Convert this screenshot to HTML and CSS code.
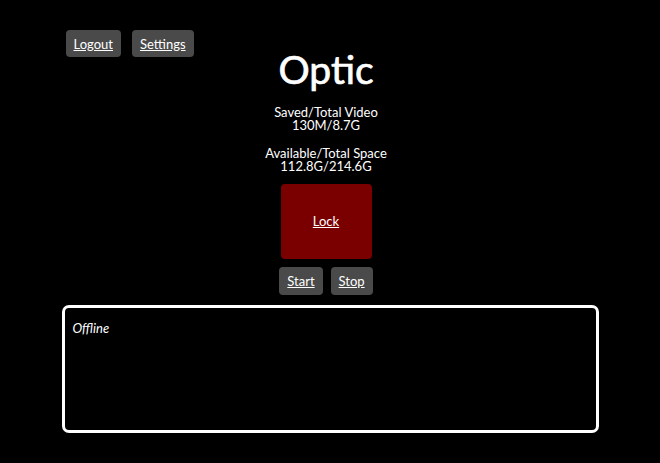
FILE: index.html
```html
<!DOCTYPE html>
<html>
<head>
<meta charset="utf-8">
<link rel="stylesheet" href="styles.css">
</head>
<body>
<div class="page">
  <header class="header">
    <nav class="nav">
      <a class="btn" href="#">Logout</a>
      <a class="btn" href="#">Settings</a>
    </nav>
    <h1 class="title">Optic</h1>
    <div></div>
  </header>
  <main class="center">
    <p class="stat">Saved/Total Video<br>130M/8.7G</p>
    <p class="stat">Available/Total Space<br>112.8G/214.6G</p>
    <a class="lock" href="#">Lock</a>
    <div class="controls">
      <a class="btn" href="#">Start</a>
      <a class="btn" href="#">Stop</a>
    </div>
  </main>
  <section class="log">
    <em>Offline</em>
  </section>
</div>
</body>
</html>
```
FILE: styles.css
```css
html, body {
  margin: 0;
  background: #000;
  color: #fff;
  font-family: Lato, "Open Sans", sans-serif;
  font-size: 13px;
}
.page {
  width: 537px;
  margin: 0 auto;
  padding-top: 30px;
}
.header {
  display: grid;
  grid-template-columns: 1fr auto 1fr;
  align-items: start;
}
.nav {
  display: flex;
  gap: 11px;
  padding-left: 4px;
}
.btn {
  display: inline-flex;
  align-items: center;
  justify-content: center;
  height: 27px;
  padding: 0 8px;
  background: #4a4a4a;
  border-radius: 4px;
  color: #fff;
  text-decoration: underline;
  font-size: 13px;
}
.controls .btn {
  height: 28px;
}
.title {
  margin: 16px 8px 0 0;
  font-family: Lato, sans-serif;
  font-size: 39px;
  font-weight: normal;
  -webkit-text-stroke: 0.7px #fff;
  line-height: 46px;
}
.center {
  display: flex;
  flex-direction: column;
  align-items: center;
  padding-right: 8px;
}
.stat {
  margin: 14px 0 0;
  line-height: 13px;
  text-align: center;
}
.stat + .stat {
  margin-top: 15px;
}
.lock {
  display: flex;
  align-items: center;
  justify-content: center;
  width: 91px;
  height: 75px;
  padding-bottom: 2px;
  box-sizing: border-box;
  margin-top: 11px;
  background: #7a0000;
  border-radius: 4px;
  color: #fff;
  text-decoration: underline;
}
.controls {
  display: flex;
  gap: 8px;
  margin-top: 8px;
}
.log {
  box-sizing: border-box;
  margin-top: 10px;
  height: 128px;
  border: 3px solid #fff;
  border-radius: 7px;
  padding: 12px 8px;
}
```
